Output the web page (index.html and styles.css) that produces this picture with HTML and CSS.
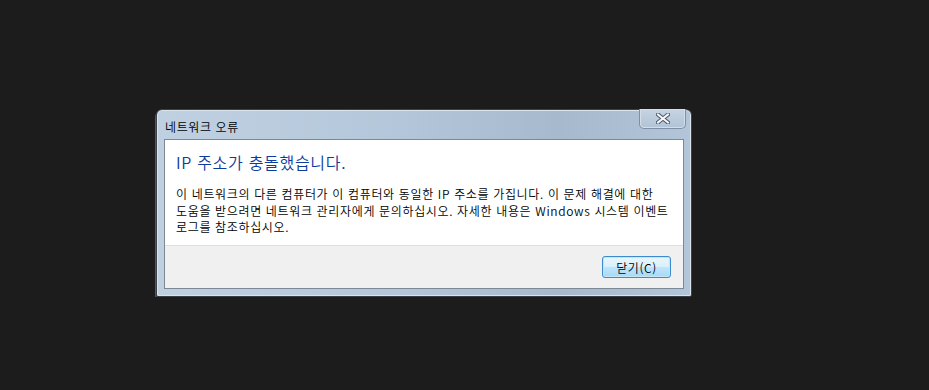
FILE: index.html
```html
<!DOCTYPE html>
<html lang="ko">
<head>
    <meta charset="UTF-8">
    <meta name="viewport" content="width=device-width, initial-scale=1.0">
    <title>네트워크 오류</title>
    <link rel="stylesheet" href="styles.css">
</head>
<body>
    <div class="dialog">
        <div class="titlebar">
            <span class="title">네트워크 오류</span>
            <button class="close" type="button">
                <svg width="14" height="11" viewBox="0 0 14 11">
                    <path d="M2 1.5 L12 9.5 M12 1.5 L2 9.5" stroke="#4a5568" stroke-width="4" stroke-linecap="square"/>
                    <path d="M2 1.5 L12 9.5 M12 1.5 L2 9.5" stroke="#f4f6f8" stroke-width="2" stroke-linecap="square"/>
                </svg>
            </button>
        </div>
        <div class="panel">
            <div class="content">
                <h1 class="heading">IP 주소가 충돌했습니다.</h1>
                <div class="message">
                    <p>이 네트워크의 다른 컴퓨터가 이 컴퓨터와 동일한 IP 주소를 가집니다. 이 문제 해결에 대한</p>
                    <p>도움을 받으려면 네트워크 관리자에게 문의하십시오. 자세한 내용은 Windows 시스템 이벤트</p>
                    <p>로그를 참조하십시오.</p>
                </div>
            </div>
            <div class="footer">
                <button class="btn" type="button">닫기(C)</button>
            </div>
        </div>
    </div>
</body>
</html>
```

FILE: styles.css
```css
body{
    margin: 0;
    background: #1c1c1c;
    font-family: "Noto Sans CJK KR", "Noto Sans", sans-serif;
}

.dialog{
    margin: 109px 0 0 156px;
    width: 536px;
    height: 188px;
    box-sizing: border-box;
    border: 1px solid #3c4046;
    border-radius: 6px 6px 2px 2px;
    background: linear-gradient(90deg, #bfd0e1 0%, #b4c7da 45%, #a6b9cd 75%, #b3c5d8 100%);
    padding: 0 7px 7px 7px;
    display: flex;
    flex-direction: column;
    box-shadow: inset 0 0 0 1px #d9e4ee, -1px 2px 0 #55585c;
}

.titlebar{
    height: 29px;
    flex-shrink: 0;
    display: flex;
    align-items: flex-start;
    justify-content: space-between;
}

.title{
    font-size: 12px;
    font-weight: 350;
    letter-spacing: 0.6px;
    color: #000;
    margin: 8px 0 0 1px;
    line-height: 17px;
}

.close{
    width: 47px;
    height: 20px;
    margin: -1px -2px 0 0;
    padding: 0;
    border: 1px solid #7f8fa3;
    border-top: none;
    border-radius: 0 0 5px 5px;
    background: linear-gradient(#c6d4e2, #b1c3d6);
    box-shadow: inset 0 0 0 1px #d3dee9;
    display: flex;
    align-items: center;
    justify-content: center;
}

.panel{
    flex: 1;
    min-height: 0;
    background: #fff;
    border: 1px solid #7c8896;
    display: flex;
    flex-direction: column;
}

.content{
    flex: 1;
    padding: 10px 12px 0 11px;
    border-bottom: 1px solid #dfdfdf;
}

.heading{
    margin: 0;
    font-weight: 350;
    font-size: 16px;
    letter-spacing: 0.7px;
    line-height: 24px;
    color: #0d3a9c;
}

.message{
    margin-top: 11px;
    font-size: 12px;
    font-weight: 350;
    line-height: 17px;
    letter-spacing: 0.65px;
    white-space: nowrap;
    color: #000;
}

.message p{
    margin: 0;
    height: 16.5px;
}

.footer{
    height: 42px;
    flex-shrink: 0;
    background: #f0f0f0;
    display: flex;
    align-items: center;
    justify-content: flex-end;
    padding-right: 12px;
}

.btn{
    width: 69px;
    height: 22px;
    padding: 0;
    font-family: inherit;
    font-size: 12px;
    font-weight: 350;
    letter-spacing: 0.6px;
    color: #000;
    border: 1px solid #3c8bd0;
    border-radius: 3px;
    background: linear-gradient(#eaf6fd 0%, #d9f0fc 50%, #bee6fd 51%, #a7d9f5 100%);
    box-shadow: inset 0 0 0 1px #c4e5f6;
}
```
